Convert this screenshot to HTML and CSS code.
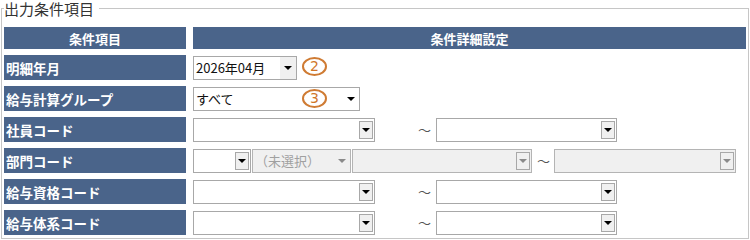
FILE: index.html
```html
<!DOCTYPE html>
<html lang="ja">
<head>
    <meta charset="UTF-8">
    <title>出力条件項目</title>
    <link rel="stylesheet" href="styles.css">
</head>
<body>

    <fieldset class="cond">
        <legend>出力条件項目</legend>
        <div class="grid">
            <!-- Header -->
            <div class="head">条件項目</div>
            <div class="head">条件詳細設定</div>

            <!-- 明細年月 -->
            <div class="label">明細年月</div>
            <div class="field">
                <div class="sel" style="width:104px">2026年04月<span class="btn flat"><i class="tri"></i></span></div>
                <span class="mark mark2">2</span>
            </div>

            <!-- 給与計算グループ -->
            <div class="label">給与計算グループ</div>
            <div class="field">
                <div class="sel" style="width:167px">すべて<span class="btn plain"><i class="tri"></i></span></div>
                <span class="mark mark3">3</span>
            </div>

            <!-- 社員コード -->
            <div class="label">社員コード</div>
            <div class="field">
                <div class="sel" style="width:182px"><span class="btn"><i class="tri"></i></span></div>
                <span class="tilde wide">〜</span>
                <div class="sel" style="width:181px"><span class="btn"><i class="tri"></i></span></div>
            </div>

            <!-- 部門コード -->
            <div class="label">部門コード</div>
            <div class="field">
                <div class="sel" style="width:58px"><span class="btn"><i class="tri"></i></span></div>
                <div class="sel off next" style="width:99px">（未選択）<span class="btn plain off"><i class="tri"></i></span></div>
                <div class="sel off next" style="width:180px"><span class="btn"><i class="tri"></i></span></div>
                <span class="tilde">〜</span>
                <div class="sel off" style="width:182px"><span class="btn"><i class="tri"></i></span></div>
            </div>

            <!-- 給与資格コード -->
            <div class="label">給与資格コード</div>
            <div class="field">
                <div class="sel" style="width:182px"><span class="btn"><i class="tri"></i></span></div>
                <span class="tilde wide">〜</span>
                <div class="sel" style="width:181px"><span class="btn"><i class="tri"></i></span></div>
            </div>

            <!-- 給与体系コード -->
            <div class="label">給与体系コード</div>
            <div class="field">
                <div class="sel" style="width:182px"><span class="btn"><i class="tri"></i></span></div>
                <span class="tilde wide">〜</span>
                <div class="sel" style="width:181px"><span class="btn"><i class="tri"></i></span></div>
            </div>
        </div>
    </fieldset>

</body>
</html>
```

FILE: styles.css
```css
/* Global Styles */
body {
    margin: 0;
    background-color: #ffffff;
    font-family: "Noto Sans CJK JP", "DejaVu Sans", sans-serif;
    color: #222;
}

/* Frame */
.cond {
    margin: 0 1px 0 1px;
    padding: 0 2px 3px 2px;
    border: 1px solid #c6c6c6;
}

.cond legend {
    padding: 1px 5px 0 0;
    margin-left: 0;
    font-size: 15px;
    line-height: 16px;
    color: #333;
}

.grid {
    display: grid;
    grid-template-columns: 182px 1fr;
    grid-template-rows: 22px repeat(6, 25px);
    column-gap: 7px;
    row-gap: 6px;
    margin-top: 10px;
}

/* Header cells */
.head {
    background-color: #4a648a;
    color: #fff;
    font-size: 13px;
    font-weight: bold;
    display: flex;
    align-items: center;
    justify-content: center;
}

/* Label cells */
.label {
    background-color: #4a648a;
    color: #fff;
    font-size: 13.5px;
    font-weight: bold;
    display: flex;
    align-items: center;
    padding-left: 2px;
}

.field {
    position: relative;
    display: flex;
    align-items: center;
}

/* Select box */
.sel {
    height: 24px;
    box-sizing: border-box;
    border: 1px solid #a8a8a8;
    background-color: #fff;
    display: flex;
    align-items: center;
    padding-left: 2px;
    font-size: 13px;
    color: #111;
}

.sel.off {
    background-color: #f0f0f0;
    border-color: #b4b4b4;
    color: #a0a0a0;
}

.sel.next {
    margin-left: 1px;
}

.btn {
    margin-left: auto;
    margin-right: 1px;
    width: 14px;
    height: 18px;
    box-sizing: border-box;
    border: 1px solid #a8a8a8;
    background-color: #f0f0f0;
    display: flex;
    align-items: center;
    justify-content: center;
}

.btn.flat {
    border-color: #f0f0f0;
    width: 16px;
    height: 22px;
    margin-right: 0;
}

.btn.plain {
    border-color: transparent;
    background-color: transparent;
}

.tri {
    width: 0;
    height: 0;
    border-left: 4px solid transparent;
    border-right: 4px solid transparent;
    border-top: 4px solid #000;
}

.off .tri {
    border-top-color: #8a8a8a;
}

/* Tilde between ranges */
.tilde {
    width: 13px;
    margin: 0 4px 0 5px;
    font-size: 13px;
    color: #555;
    text-align: center;
}

.tilde.wide {
    margin-left: 43px;
    margin-right: 5px;
}

/* Circled annotation numbers */
.mark {
    position: absolute;
    left: 109px;
    width: 25px;
    height: 19px;
    box-sizing: border-box;
    border: 2px solid #cf7b33;
    border-radius: 50%;
    color: #d0762a;
    font-family: "DejaVu Sans", sans-serif;
    font-size: 14px;
    line-height: 15px;
    text-align: center;
}

.mark2 {
    top: 2px;
}

.mark3 {
    top: 3px;
}
```
